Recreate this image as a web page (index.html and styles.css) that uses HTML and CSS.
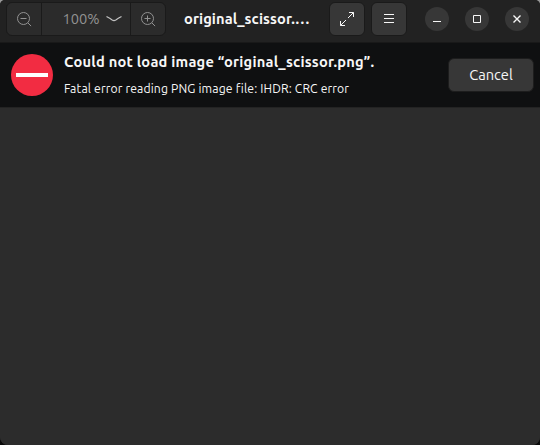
FILE: index.html
```
<!DOCTYPE html>
<html lang="en">
<head>
<meta charset="utf-8">
<title>Image Viewer</title>
<link rel="stylesheet" href="styles.css">
</head>
<body>
<div class="window">
  <header class="headerbar">
    <div class="zoom-group">
      <button class="zoom-button" aria-label="Zoom out"><svg width="16" height="16" viewBox="0 0 16 16"><circle cx="7.5" cy="7.5" r="6"/><path d="M4.5 7.5h6M11.8 11.8l3.3 3.3"/></svg></button>
      <button class="zoom-level"><span class="zoom-text">100%</span><svg width="16" height="8" viewBox="0 0 16 8"><path class="chevron" d="M.5 1.5Q4 3.3 6.2 5Q8 6.1 9.8 5Q12 3.3 15.5 1.5"/></svg></button>
      <button class="zoom-button" aria-label="Zoom in"><svg width="16" height="16" viewBox="0 0 16 16"><circle cx="7.5" cy="7.5" r="6"/><path d="M4.5 7.5h6M7.5 4.5v6M11.8 11.8l3.3 3.3"/></svg></button>
    </div>
    <h1 class="title">original_scissor.…</h1>
    <div class="tools">
      <button class="tool" aria-label="Fullscreen"><svg width="16" height="16" viewBox="0 0 16 16"><path d="M10 1.5h4.5V6M14.5 1.5L9 7M1.5 10v4.5H6M1.5 14.5L7 9"/></svg></button>
      <button class="tool" aria-label="Menu"><svg width="16" height="16" viewBox="0 0 16 16"><path d="M3 3.5h10M3 7.5h10M3 11.5h10"/></svg></button>
    </div>
    <div class="controls">
      <button class="control" aria-label="Minimize"><svg width="16" height="16" viewBox="0 0 16 16"><path d="M4 10.5h8"/></svg></button>
      <button class="control" aria-label="Maximize"><svg width="16" height="16" viewBox="0 0 16 16"><path d="M4.5 4.5h7v7h-7z"/></svg></button>
      <button class="control" aria-label="Close"><svg width="16" height="16" viewBox="0 0 16 16"><path class="close" d="M4.5 4.5l7 7M11.5 4.5l-7 7"/></svg></button>
    </div>
  </header>
  <section class="infobar">
    <svg class="error-icon" width="42" height="42" viewBox="0 0 42 42"><circle cx="21" cy="21" r="21"/><rect x="5" y="19" width="32" height="4"/></svg>
    <div class="message">
      <strong class="primary">Could not load image “original_scissor.png”.</strong>
      <span class="secondary">Fatal error reading PNG image file: IHDR: CRC error</span>
    </div>
    <button class="cancel">Cancel</button>
  </section>
  <main class="canvas"></main>
</div>
</body>
</html>
```
FILE: styles.css
```
* { box-sizing: border-box; }
body { margin: 0; background: linear-gradient(#999 0 20px, #090909 20px); font-family: Ubuntu, "Noto Sans", sans-serif; color: #f7f7f7; }
button { margin: 0; padding: 0; border: 0; color: inherit; font: inherit; display: flex; align-items: center; justify-content: center; }
svg { display: block; flex: none; fill: none; stroke: currentColor; stroke-width: 1; }
.window { width: 540px; height: 445px; display: flex; flex-direction: column; overflow: hidden; background: #2c2c2c; border-radius: 5px 5px 8px 8px; }
.headerbar { height: 43px; flex: none; display: flex; align-items: flex-start; padding: 2px 11px 0 6px; background: #222; border-bottom: 1px solid #191919; }
.zoom-group { width: 160px; height: 34px; display: flex; background: #2b2b2b; border: 1px solid #1a1a1a; border-radius: 6px; color: #929292; }
.zoom-button { width: 34px; background: none; }
.zoom-level { flex: 1; background: none; border: solid #1a1a1a; border-width: 0 1px; gap: 6px; padding-left: 12px; }
.zoom-text { font-size: 14.67px; padding-bottom: 2px; }
.chevron { stroke: #c2c2c2; stroke-width: 1.2; }
.title { margin: 0 0 0 18px; width: 127px; font-size: 14.67px; letter-spacing: .08px; line-height: 34px; white-space: nowrap; }
.tools { margin-left: 18px; display: flex; gap: 6px; }
.tool { width: 36px; height: 34px; background: #373737; border: 1px solid #1a1a1a; border-radius: 6px; }
.controls { margin: 5px 0 0 18px; display: flex; gap: 16px; }
.control { width: 24px; height: 24px; border-radius: 50%; background: #373737; }
.close { stroke-width: 1.4; }
.infobar { height: 65px; flex: none; display: flex; align-items: center; padding: 0 6px 0 11px; background: #0f1011; border-bottom: 1px solid #232323; }
.error-icon { stroke: none; }
.error-icon circle { fill: #f22c42; }
.error-icon rect { fill: #fff; }
.message { flex: 1; margin-left: 11px; display: flex; flex-direction: column; gap: 7px; white-space: nowrap; }
.primary { font-size: 14.67px; letter-spacing: .22px; line-height: 20px; }
.secondary { font-size: 12.22px; letter-spacing: .13px; line-height: 20px; }
.cancel { width: 86px; height: 34px; padding-bottom: 2px; background: #373737; border: 1px solid #1d1d1d; border-radius: 6px; font-size: 14.67px; }
.canvas { flex: 1; background: #2c2c2c; }
```
